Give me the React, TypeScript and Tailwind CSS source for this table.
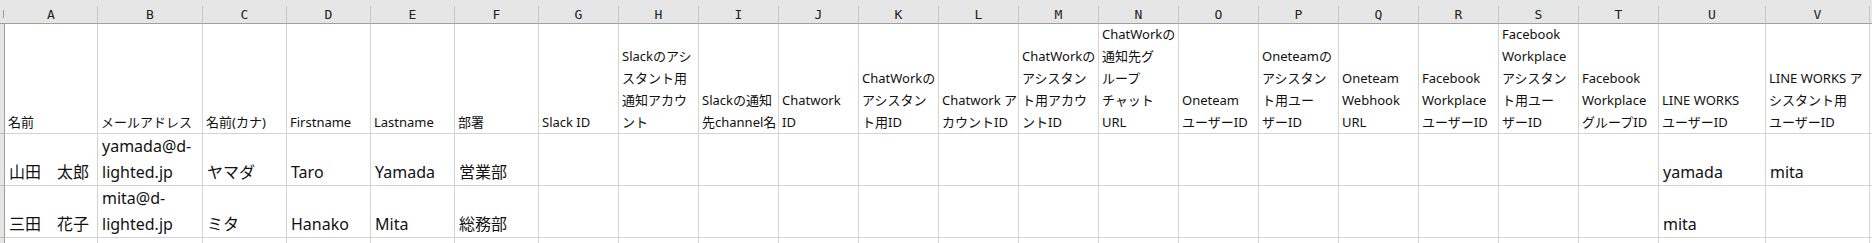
import { Fragment } from "react";

const letters = [
  "A", "B", "C", "D", "E", "F", "G", "H", "I", "J", "K",
  "L", "M", "N", "O", "P", "Q", "R", "S", "T", "U", "V",
];

// header cell text, one entry per line (wrapped as in the sheet)
const headers: string[][] = [
  ["名前"],
  ["メールアドレス"],
  ["名前(カナ)"],
  ["Firstname"],
  ["Lastname"],
  ["部署"],
  ["Slack ID"],
  ["Slackのアシ", "スタント用", "通知アカウ", "ント"],
  ["Slackの通知", "先channel名"],
  ["Chatwork", "ID"],
  ["ChatWorkの", "アシスタン", "ト用ID"],
  ["Chatwork ア", "カウントID"],
  ["ChatWorkの", "アシスタン", "ト用アカウ", "ントID"],
  ["ChatWorkの", "通知先グ", "ループ", "チャット", "URL"],
  ["Oneteam", "ユーザーID"],
  ["Oneteamの", "アシスタン", "ト用ユー", "ザーID"],
  ["Oneteam", "Webhook", "URL"],
  ["Facebook", "Workplace", "ユーザーID"],
  ["Facebook", "Workplace", "アシスタン", "ト用ユー", "ザーID"],
  ["Facebook", "Workplace", "グループID"],
  ["LINE WORKS", "ユーザーID"],
  ["LINE WORKS ア", "シスタント用", "ユーザーID"],
];

const blank = (): string[][] => letters.map(() => []);

const rows: string[][][] = [
  (() => {
    const r = blank();
    r[0] = ["山田　太郎"];
    r[1] = ["yamada@d-", "lighted.jp"];
    r[2] = ["ヤマダ"];
    r[3] = ["Taro"];
    r[4] = ["Yamada"];
    r[5] = ["営業部"];
    r[20] = ["yamada"];
    r[21] = ["mita"];
    return r;
  })(),
  (() => {
    const r = blank();
    r[0] = ["三田　花子"];
    r[1] = ["mita@d-", "lighted.jp"];
    r[2] = ["ミタ"];
    r[3] = ["Hanako"];
    r[4] = ["Mita"];
    r[5] = ["総務部"];
    r[20] = ["mita"];
    return r;
  })(),
  blank(),
];

function Lines({ lines }: { lines: string[] }) {
  return (
    <>
      {lines.map((l, i) => (
        <span key={i} className="block whitespace-pre">
          {l}
        </span>
      ))}
    </>
  );
}

export default function App() {
  return (
    <div className="h-[243px] w-[1872px] overflow-hidden bg-white font-['Noto_Sans','Noto_Sans_CJK_JP',sans-serif] text-[#111]">
      <div className="grid grid-cols-[5px_93px_105px_repeat(4,84px)_repeat(14,80px)_107px_104px_1fr]">
        {/* column letters */}
        <div className="h-[24px] border-b border-[#a0a0a0] bg-[#e6e6e6]">
          <div className="mt-[10px] ml-[3px] h-[8px] w-[1px] bg-[#9a9a9a]" />
        </div>
        {letters.map((l) => (
          <div
            key={l}
            className="h-[24px] border-b border-[#a0a0a0] bg-[#e6e6e6]"
          >
            <div className="mt-[6px] flex h-[17px] items-center justify-center border-r border-[#c8c8c8] font-['DejaVu_Sans_Mono',monospace] text-[13px] font-light text-[#222]">
              {l}
            </div>
          </div>
        ))}
        <div className="h-[24px] border-b border-[#a0a0a0] bg-[#e6e6e6]" />

        {/* header row */}
        <div className="h-[110px] border-r border-b border-r-[#a0a0a0] border-b-[#bdbdbd] bg-[#e6e6e6]" />
        {headers.map((h, i) => (
          <div
            key={i}
            className="flex h-[110px] flex-col justify-end border-r border-b border-[#d4d4d4] px-[3px] text-[13px] leading-[22px]"
          >
            <Lines lines={h} />
          </div>
        ))}
        <div className="h-[110px] border-b border-[#d4d4d4]" />

        {/* data rows */}
        {rows.map((r, ri) => (
          <Fragment key={ri}>
            <div className="h-[52px] border-r border-b border-r-[#a0a0a0] border-b-[#bdbdbd] bg-[#e6e6e6]" />
            {r.map((c, ci) => (
              <div
                key={ci}
                className="flex h-[52px] flex-col justify-end border-r border-b border-[#d4d4d4] px-[4px] text-[16px] leading-[26px]"
              >
                <Lines lines={c} />
              </div>
            ))}
            <div className="h-[52px] border-b border-[#d4d4d4]" />
          </Fragment>
        ))}
      </div>
    </div>
  );
}
